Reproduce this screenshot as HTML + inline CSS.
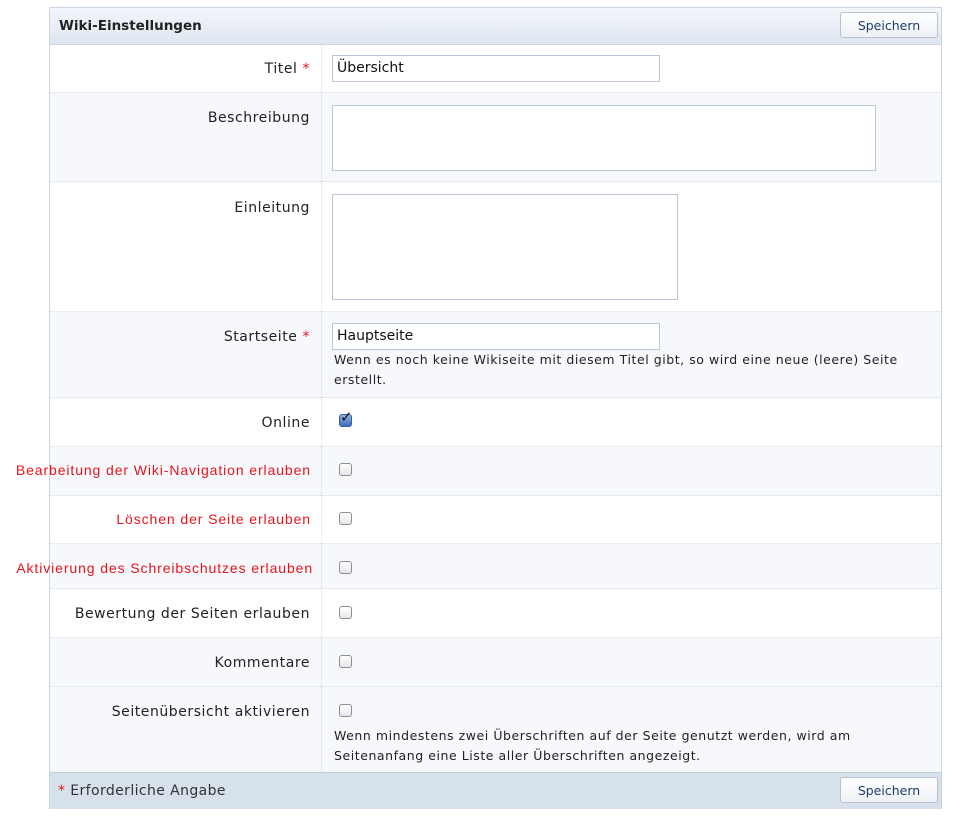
<!DOCTYPE html>
<html><head><meta charset="utf-8"><style>
body{margin:0;background:#fff;width:975px;height:820px;position:relative;overflow:hidden;font-family:"DejaVu Sans","Liberation Sans",sans-serif;color:#222}
.box{position:absolute;left:49px;top:7px;width:891px;height:800px;border:1px solid #c9d5e3;}
.hdr{position:absolute;left:0;top:0;width:891px;height:36px;background:linear-gradient(#f3f6fb,#dfe6f0);border-bottom:1px solid #ccd6e3}
.hdr b{position:absolute;left:9px;top:10px;font-size:13.5px;color:#222}
.btn{position:absolute;right:3px;top:4px;width:98px;height:26px;border:1px solid #b8c2cf;border-radius:3px;background:linear-gradient(#fff,#eef1f5);font-size:12.5px;color:#1e3d6b;text-align:center;line-height:26px;box-sizing:border-box}
.row{position:absolute;left:0;width:891px;border-bottom:1px dotted #d3dae4}
.row.alt{background:#f6f8fc}
.vline{position:absolute;left:271px;top:36px;height:728px;border-left:1px dotted #d3dae4}
.lab{position:absolute;right:631px;font-size:14px;letter-spacing:0.55px;white-space:nowrap;text-align:right}
.red{color:#e8141c;font-family:"Liberation Sans",sans-serif;font-size:14px;letter-spacing:0.9px}
.star{color:#e8141c}
.inp{position:absolute;left:282px;border:1px solid #b8c6d6;background:#fff;box-sizing:border-box}
.inp span{position:absolute;left:4px;top:4px;font-size:14px;color:#111}
.cb{position:absolute;left:289px;width:13px;height:13px;border:1px solid #8a8f96;border-radius:3px;background:linear-gradient(#fff,#e6e6e6);box-sizing:border-box}
.help{position:absolute;left:284px;font-size:12.5px;letter-spacing:0.55px;line-height:20px;color:#222;white-space:nowrap}
.ftr{position:absolute;left:0;top:764px;width:891px;height:36px;background:#d7e1ec;border-top:1px solid #c2cedb}
.ftr .t{position:absolute;left:8px;top:10px;font-size:14px;letter-spacing:0.4px;color:#333}
</style></head><body>
<div class="box">
<div class="hdr"><b>Wiki-Einstellungen</b><div class="btn">Speichern</div></div>
<div class="row" style="top:36px;height:48px"></div>
<div class="row alt" style="top:85px;height:88px"></div>
<div class="row" style="top:174px;height:129px"></div>
<div class="row alt" style="top:304px;height:85px"></div>
<div class="row" style="top:390px;height:48px"></div>
<div class="row alt" style="top:439px;height:48px"></div>
<div class="row" style="top:488px;height:47px"></div>
<div class="row alt" style="top:536px;height:44px"></div>
<div class="row" style="top:581px;height:48px"></div>
<div class="row alt" style="top:630px;height:48px"></div>
<div class="row alt" style="top:679px;height:85px;border-bottom:none"></div>
<div class="vline"></div>

<div class="lab" style="top:53px">Titel <span class="star">*</span></div>
<div class="inp" style="top:47px;width:328px;height:27px"><span>Übersicht</span></div>
<div class="lab" style="top:102px">Beschreibung</div>
<div class="inp" style="top:97px;width:544px;height:66px"></div>
<div class="lab" style="top:192px">Einleitung</div>
<div class="inp" style="top:186px;width:346px;height:106px"></div>
<div class="lab" style="top:321px">Startseite <span class="star">*</span></div>
<div class="inp" style="top:315px;width:328px;height:27px"><span>Hauptseite</span></div>
<div class="help" style="top:342px">Wenn es noch keine Wikiseite mit diesem Titel gibt, so wird eine neue (leere) Seite<br>erstellt.</div>
<div class="lab" style="top:407px">Online</div>
<div class="cb" style="top:406px;background:linear-gradient(#8fb2e0,#3c6fbf);border-color:#3a5f95"></div>
<div style="position:absolute;left:290px;top:400px;font-size:15px;color:#111;font-weight:bold">✓</div>
<div class="lab red" style="top:454px;right:630px">Bearbeitung der Wiki-Navigation erlauben</div>
<div class="cb" style="top:455px"></div>
<div class="lab red" style="top:503px;right:630px">Löschen der Seite erlauben</div>
<div class="cb" style="top:504px"></div>
<div class="lab red" style="top:552px;right:628px">Aktivierung des Schreibschutzes erlauben</div>
<div class="cb" style="top:553px"></div>
<div class="lab" style="top:598px">Bewertung der Seiten erlauben</div>
<div class="cb" style="top:598px"></div>
<div class="lab" style="top:647px">Kommentare</div>
<div class="cb" style="top:647px"></div>
<div class="lab" style="top:696px">Seitenübersicht aktivieren</div>
<div class="cb" style="top:696px"></div>
<div class="help" style="top:718px">Wenn mindestens zwei Überschriften auf der Seite genutzt werden, wird am<br>Seitenanfang eine Liste aller Überschriften angezeigt.</div>
<div class="ftr"><div class="t"><span class="star">*</span> Erforderliche Angabe</div><div class="btn">Speichern</div></div>
</div>
</body></html>
